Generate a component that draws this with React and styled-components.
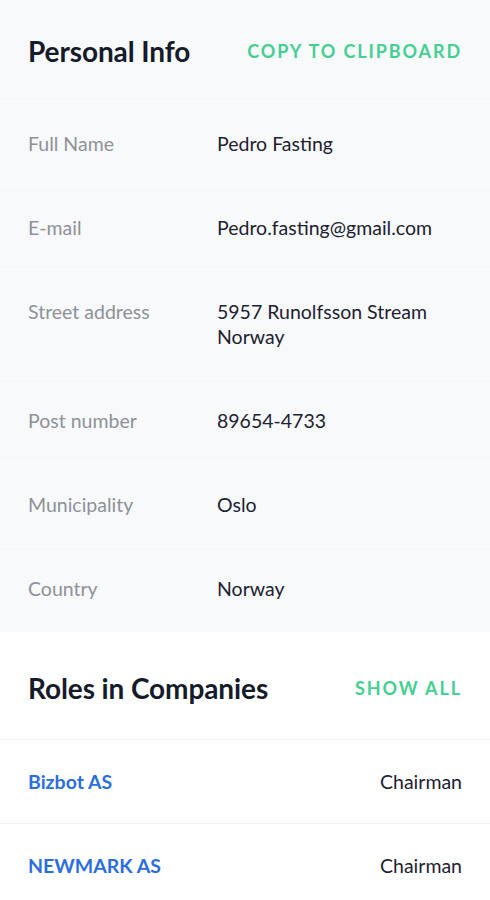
import React from 'react'
import styled, { createGlobalStyle } from 'styled-components'

const GlobalStyle = createGlobalStyle`
    body {
        margin: 0;
        background: #ffffff;
        font-family: Lato, "Open Sans", sans-serif;
        -webkit-font-smoothing: antialiased;
    }
`;

const Section = styled.section`
    background: ${props => props.tinted ? '#f8f9fb' : '#ffffff'};
`;

const Header = styled.div`
    display: flex;
    align-items: center;
    justify-content: space-between;
    height: ${props => props.tall ? '108px' : '102px'};
    padding: ${props => props.tall ? '4px' : '0'} 28px 0;
    border-bottom: 1px solid ${props => props.tinted ? '#fdfdfe' : '#f0f1f3'};
    box-sizing: border-box;
`;

const Title = styled.h2`
    margin: 0;
    font-size: 28px;
    font-weight: 700;
    color: #151b2b;
    letter-spacing: -0.1px;
`;

const Action = styled.a`
    font-size: 18px;
    font-weight: 700;
    letter-spacing: 1.9px;
    color: #45cf92;
    text-transform: uppercase;
    text-decoration: none;
    cursor: pointer;
`;

const InfoRow = styled.div`
    display: grid;
    grid-template-columns: 189px 1fr;
    padding: 29px 28px ${props => props.last ? '31px' : '29px'};
    font-size: 19.5px;
    line-height: 25px;
    border-bottom: ${props => props.last ? 'none' : '1px solid #fdfdfe'};
`;

const Label = styled.div`
    color: #8e9197;
`;

const Value = styled.div`
    color: #1d2231;
`;

const RoleRow = styled.div`
    display: flex;
    align-items: center;
    justify-content: space-between;
    padding: 29px 28px;
    font-size: 19.5px;
    line-height: 25px;
    border-bottom: 1px solid #f0f1f3;
`;

const Company = styled.a`
    color: #2c6ee0;
    font-weight: 700;
    text-decoration: none;
`;

const Role = styled.span`
    color: #1d2231;
`;

const info = [
    ['Full Name', 'Pedro Fasting'],
    ['E-mail', 'Pedro.fasting@gmail.com'],
    ['Street address', '5957 Runolfsson Stream Norway'],
    ['Post number', '89654-4733'],
    ['Municipality', 'Oslo'],
    ['Country', 'Norway'],
]

const roles = [
    ['Bizbot AS', 'Chairman'],
    ['NEWMARK AS', 'Chairman'],
]

const App = () => (
    <>
        <GlobalStyle />
        <Section tinted>
            <Header tinted>
                <Title>Personal Info</Title>
                <Action>Copy to clipboard</Action>
            </Header>
            {info.map(([label, value], i) => (
                <InfoRow key={label} last={i === info.length - 1}>
                    <Label>{label}</Label>
                    <Value>{value}</Value>
                </InfoRow>
            ))}
        </Section>
        <Section>
            <Header tall>
                <Title>Roles in Companies</Title>
                <Action>Show all</Action>
            </Header>
            {roles.map(([company, role]) => (
                <RoleRow key={company}>
                    <Company>{company}</Company>
                    <Role>{role}</Role>
                </RoleRow>
            ))}
        </Section>
    </>
)

export default App
